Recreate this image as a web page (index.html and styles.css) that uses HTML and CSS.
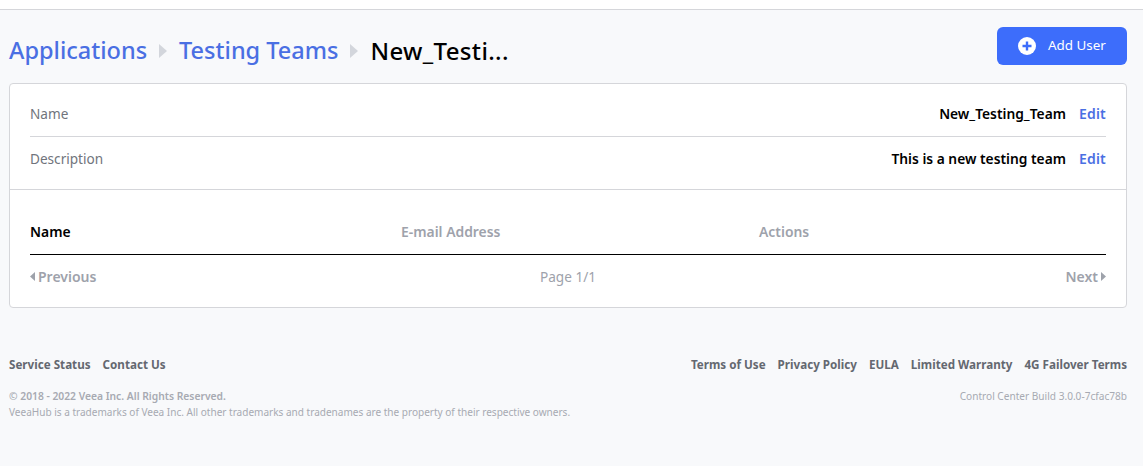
FILE: index.html
```html
<!DOCTYPE html>
<html lang="en">
<head>
    <meta charset="UTF-8">
    <title>New_Testing_Team</title>
    <link rel="stylesheet" href="styles.css">
</head>
<body>
    <div class="topbar"></div>

    <main class="content">
        <div class="page-head">
            <div class="crumbs">
                <a href="#" class="crumb-link">Applications</a>
                <svg class="crumb-arrow" viewBox="0 0 8 14"><path d="M0 0 L8 7 L0 14 Z"/></svg>
                <a href="#" class="crumb-link">Testing Teams</a>
                <svg class="crumb-arrow" viewBox="0 0 8 14"><path d="M0 0 L8 7 L0 14 Z"/></svg>
                <span class="crumb-current">New_Testi...</span>
            </div>
            <button class="add-btn">
                <svg class="add-icon" viewBox="0 0 18 18">
                    <circle cx="9" cy="9" r="9" fill="#fff"/>
                    <path d="M9 4.5 V13.5 M4.5 9 H13.5" stroke="#3d6dfb" stroke-width="2.4"/>
                </svg>
                <span class="add-label">Add User</span>
            </button>
        </div>

        <section class="card">
            <div class="info">
                <div class="info-row">
                    <span class="info-label">Name</span>
                    <span class="info-value">New_Testing_Team</span>
                    <a href="#" class="edit-link">Edit</a>
                </div>
                <div class="info-row">
                    <span class="info-label">Description</span>
                    <span class="info-value">This is a new testing team</span>
                    <a href="#" class="edit-link">Edit</a>
                </div>
            </div>

            <div class="users">
                <div class="table-head">
                    <span class="col-name">Name</span>
                    <span class="col-email">E-mail Address</span>
                    <span class="col-actions">Actions</span>
                </div>
                <div class="pager">
                    <span class="pager-btn">
                        <svg class="pager-arrow" viewBox="0 0 5 9"><path d="M5 0 L0 4.5 L5 9 Z"/></svg>
                        Previous
                    </span>
                    <span class="pager-page">Page 1/1</span>
                    <span class="pager-btn pager-next">
                        Next
                        <svg class="pager-arrow" viewBox="0 0 5 9"><path d="M0 0 L5 4.5 L0 9 Z"/></svg>
                    </span>
                </div>
            </div>
        </section>

        <footer class="footer">
            <div class="footer-links">
                <div class="link-group">
                    <a href="#">Service Status</a>
                    <a href="#">Contact Us</a>
                </div>
                <div class="link-group">
                    <a href="#">Terms of Use</a>
                    <a href="#">Privacy Policy</a>
                    <a href="#">EULA</a>
                    <a href="#">Limited Warranty</a>
                    <a href="#">4G Failover Terms</a>
                </div>
            </div>
            <div class="legal">
                <div>
                    <p class="copyright">© 2018 - 2022 Veea Inc. All Rights Reserved.</p>
                    <p class="trademark">VeeaHub is a trademarks of Veea Inc. All other trademarks and tradenames are the property of their respective owners.</p>
                </div>
                <p class="build">Control Center Build 3.0.0-7cfac78b</p>
            </div>
        </footer>
    </main>
</body>
</html>
```

FILE: styles.css
```css
* {
    margin: 0;
    padding: 0;
    box-sizing: border-box;
}

body {
    font-family: "Noto Sans", sans-serif;
    background-color: #f8f9fb;
    color: #000;
}

a {
    text-decoration: none;
}

.topbar {
    height: 10px;
    background-color: #fff;
    border-bottom: 1px solid #d5d6da;
}

.content {
    padding: 17px 16px 0 9px;
}

/* Breadcrumb and button */
.page-head {
    display: flex;
    justify-content: space-between;
    align-items: flex-start;
    height: 56px;
}

.crumbs {
    display: flex;
    align-items: center;
    height: 46px;
    font-size: 23.5px;
    font-weight: 500;
}

.crumb-link {
    color: #4a6fe3;
}

.crumb-current {
    color: #000;
    font-size: 24px;
    letter-spacing: 0.35px;
}

.crumb-arrow {
    width: 8px;
    height: 14px;
    margin: 2px 12px 0;
    fill: #d3d6dc;
}

.add-btn {
    display: flex;
    align-items: center;
    width: 130px;
    height: 38px;
    padding-left: 21px;
    background-color: #3d6dfb;
    color: #fff;
    border: none;
    border-radius: 6px;
    font-family: inherit;
    font-size: 13.4px;
}

.add-icon {
    width: 18px;
    height: 18px;
    margin-right: 12px;
}

.add-label {
    padding-bottom: 2px;
}

/* Card */
.card {
    background-color: #fff;
    border: 1px solid #d5d6da;
    border-radius: 4px;
    height: 225px;
}

.info {
    padding: 8px 20px 8px;
    border-bottom: 1px solid #d5d6da;
    height: 106px;
}

.info-row {
    display: flex;
    align-items: center;
    height: 45px;
    padding-bottom: 2px;
    font-size: 13.6px;
}

.info-row:first-child {
    border-bottom: 1px solid #d5d6da;
}

.info-label {
    color: #70747c;
    flex: 1;
}

.info-value {
    font-weight: 600;
    font-size: 13.8px;
}

.edit-link {
    margin-left: 13px;
    color: #4a6fe3;
    font-weight: 600;
    font-size: 14px;
    letter-spacing: 0.2px;
}

.users {
    padding: 0 20px;
}

.table-head {
    display: flex;
    align-items: center;
    height: 65px;
    padding-top: 19px;
    border-bottom: 1px solid #000;
    font-size: 13.9px;
    font-weight: 600;
    color: #9ea2ab;
}

.col-name {
    width: 371px;
    color: #000;
}

.col-email {
    width: 358px;
}

.pager {
    display: flex;
    align-items: center;
    height: 43px;
    color: #9ea2ab;
    font-size: 13.6px;
}

.pager-btn {
    flex: 1;
    display: flex;
    align-items: center;
    gap: 3px;
    font-size: 14px;
    font-weight: 600;
}

.pager-next {
    justify-content: flex-end;
}

.pager-arrow {
    width: 5px;
    height: 9px;
    fill: #9ea2ab;
}

/* Footer */
.footer {
    margin-top: 49px;
}

.footer-links {
    display: flex;
    justify-content: space-between;
    font-size: 11.65px;
    line-height: 16px;
    font-weight: 700;
}

.link-group {
    display: flex;
    gap: 12px;
}

.link-group a {
    color: #646870;
}

.legal {
    display: flex;
    justify-content: space-between;
    margin-top: 15px;
    font-size: 10.04px;
    line-height: 16px;
    color: #a7aab2;
}

.copyright {
    font-size: 10.3px;
    font-weight: 600;
}

.build {
    font-size: 10.1px;
}
```
